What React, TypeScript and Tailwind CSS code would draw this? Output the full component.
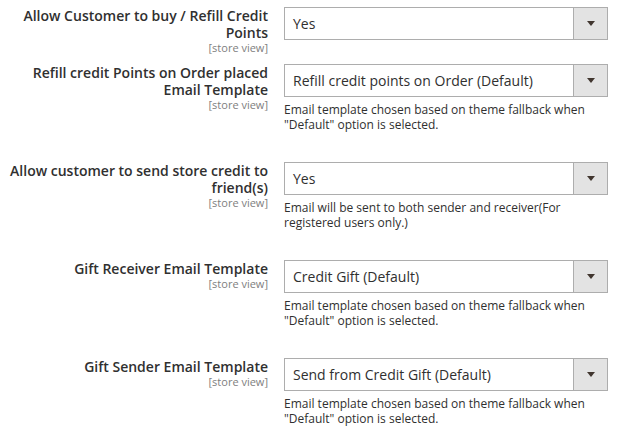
import React from 'react'

interface FieldRowProps {
  label: string
  value: string
  note?: string
  last?: boolean
}

function SelectBox({ value }: { value: string }) {
  return (
    <div className="flex h-[33px] w-[324px] border border-[#adadad] bg-white">
      <div className="flex flex-1 items-center pl-[8px] text-[14px] text-[#303030]">{value}</div>
      <div className="flex w-[34px] items-center justify-center border-l border-[#adadad] bg-[#e3e3e3]">
        <svg width="8" height="5" viewBox="0 0 8 5">
          <path d="M0 0 L8 0 L4 5 Z" fill="#41362f" />
        </svg>
      </div>
    </div>
  )
}

function FieldRow({ label, value, note, last }: FieldRowProps) {
  return (
    <div className={`flex items-start gap-4 ${note ? 'pb-[30px]' : 'pb-[9px]'} ${last ? 'pb-0' : ''}`}>
      <div className="w-[268px] shrink-0 text-right">
        <div className="text-[14px] font-semibold leading-[17px] text-[#303030]">{label}</div>
        <div className="text-[11px] leading-[14px] text-[#808080]">[store view]</div>
      </div>
      <div className="flex flex-col">
        <SelectBox value={value} />
        {note && (
          <p className="mt-[5px] w-[324px] text-[12px] leading-[15px] text-[#303030]">{note}</p>
        )}
      </div>
    </div>
  )
}

const fallbackNote = 'Email template chosen based on theme fallback when "Default" option is selected.'

export default function App() {
  return (
    <div
      className="h-[432px] w-[619px] overflow-hidden bg-white pt-[7px]"
      style={{ fontFamily: '"Open Sans", "Noto Sans", sans-serif' }}
    >
      <FieldRow label="Allow Customer to buy / Refill Credit Points" value="Yes" />
      <FieldRow
        label="Refill credit Points on Order placed Email Template"
        value="Refill credit points on Order (Default)"
        note={fallbackNote}
      />
      <FieldRow
        label="Allow customer to send store credit to friend(s)"
        value="Yes"
        note="Email will be sent to both sender and receiver(For registered users only.)"
      />
      <FieldRow label="Gift Receiver Email Template" value="Credit Gift (Default)" note={fallbackNote} />
      <FieldRow
        label="Gift Sender Email Template"
        value="Send from Credit Gift (Default)"
        note={fallbackNote}
        last
      />
    </div>
  )
}
